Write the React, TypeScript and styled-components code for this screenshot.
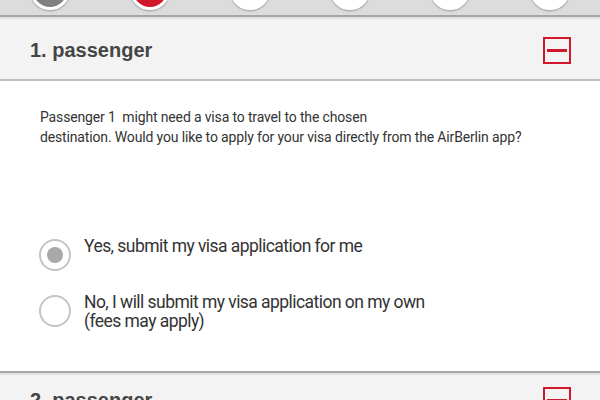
import React from "react";
import styled, { createGlobalStyle } from "styled-components";

const Global = createGlobalStyle`
  html, body { margin: 0; padding: 0; background: #ffffff; }
  body { font-family: Roboto, "Liberation Sans", Arial, sans-serif; width: 600px; height: 400px; overflow: hidden; }
  * { box-sizing: border-box; }
`;

const RED = "#d0172c";

const Page = styled.div`
  width: 600px;
  height: 400px;
  overflow: hidden;
  display: flex;
  flex-direction: column;
`;

const Stepper = styled.div`
  height: 15px;
  flex: none;
  background: #dcdcdc;
  display: flex;
  overflow: hidden;
`;

const StepCell = styled.div`
  flex: 1;
  display: flex;
  justify-content: center;
`;

const StepDot = styled.div<{ $fill: string }>`
  width: 40px;
  height: 40px;
  margin-top: -30px;
  border-radius: 50%;
  border: 3px solid #ffffff;
  background: ${(p) => p.$fill};
  box-shadow: 0 1px 2px rgba(0, 0, 0, 0.3);
`;

const SectionHeader = styled.div<{ $padTop: number }>`
  flex: none;
  height: 66px;
  background: #f3f3f3;
  border-top: 2px solid #a7a7a7;
  border-bottom: 2px solid #bdbdbd;
  box-shadow: inset 0 2px 1px rgba(0, 0, 0, 0.07);
  display: flex;
  align-items: flex-start;
  justify-content: space-between;
  padding: ${(p) => p.$padTop}px 29px 0 30px;
`;

const HeaderTitle = styled.h2`
  margin: 0;
  font-family: "Liberation Sans", Arial, sans-serif;
  font-weight: bold;
  font-size: 20px;
  line-height: 27px;
  color: #454545;
`;

const ToggleBox = styled.button`
  width: 28px;
  height: 27px;
  padding: 0;
  border: 2px solid ${RED};
  background: transparent;
  display: flex;
  align-items: center;
  justify-content: center;
`;

const MinusBar = styled.span`
  display: block;
  width: 20px;
  height: 3px;
  background: ${RED};
`;

const Body = styled.div`
  flex: none;
  padding: 27px 40px 40px 40px;
  background: #ffffff;
`;

const Intro = styled.p`
  margin: 0;
  font-size: 14px;
  line-height: 19.5px;
  color: #333333;
  letter-spacing: -0.15px;
`;

const Options = styled.div`
  margin-top: 90px;
  display: flex;
  flex-direction: column;
  gap: 22px;
`;

const OptionRow = styled.label`
  display: grid;
  grid-template-columns: 32px 1fr;
  column-gap: 12px;
  align-items: start;
`;

const Radio = styled.span<{ $checked?: boolean }>`
  width: 32px;
  height: 32px;
  margin-top: 2px;
  margin-left: -1px;
  border-radius: 50%;
  border: 2px solid #c4c4c4;
  display: flex;
  align-items: center;
  justify-content: center;
  &::after {
    content: "";
    display: ${(p) => (p.$checked ? "block" : "none")};
    width: 16px;
    height: 16px;
    border-radius: 50%;
    background: #a8a8a8;
  }
`;

const OptionText = styled.span`
  font-size: 17.5px;
  line-height: 19px;
  color: #333333;
  letter-spacing: -0.55px;
`;

const steps = ["#808080", RED, "#ffffff", "#ffffff", "#ffffff", "#ffffff"];

export default function App() {
  return (
    <Page>
      <Global />
      <Stepper>
        {steps.map((c, i) => (
          <StepCell key={i}>
            <StepDot $fill={c} />
          </StepCell>
        ))}
      </Stepper>
      <SectionHeader $padTop={20}>
        <HeaderTitle>1. passenger</HeaderTitle>
        <ToggleBox aria-label="collapse">
          <MinusBar />
        </ToggleBox>
      </SectionHeader>
      <Body>
        <Intro>
          Passenger 1&nbsp; might need a visa to travel to the chosen
          <br />
          destination. Would you like to apply for your visa directly from the AirBerlin app?
        </Intro>
        <Options>
          <OptionRow>
            <Radio $checked />
            <OptionText>Yes, submit my visa application for me</OptionText>
          </OptionRow>
          <OptionRow>
            <Radio />
            <OptionText>
              No, I will submit my visa application on my own
              <br />
              (fees may apply)
            </OptionText>
          </OptionRow>
        </Options>
      </Body>
      <SectionHeader $padTop={14}>
        <HeaderTitle>2. passenger</HeaderTitle>
        <ToggleBox aria-label="expand">
          <MinusBar />
        </ToggleBox>
      </SectionHeader>
    </Page>
  );
}
